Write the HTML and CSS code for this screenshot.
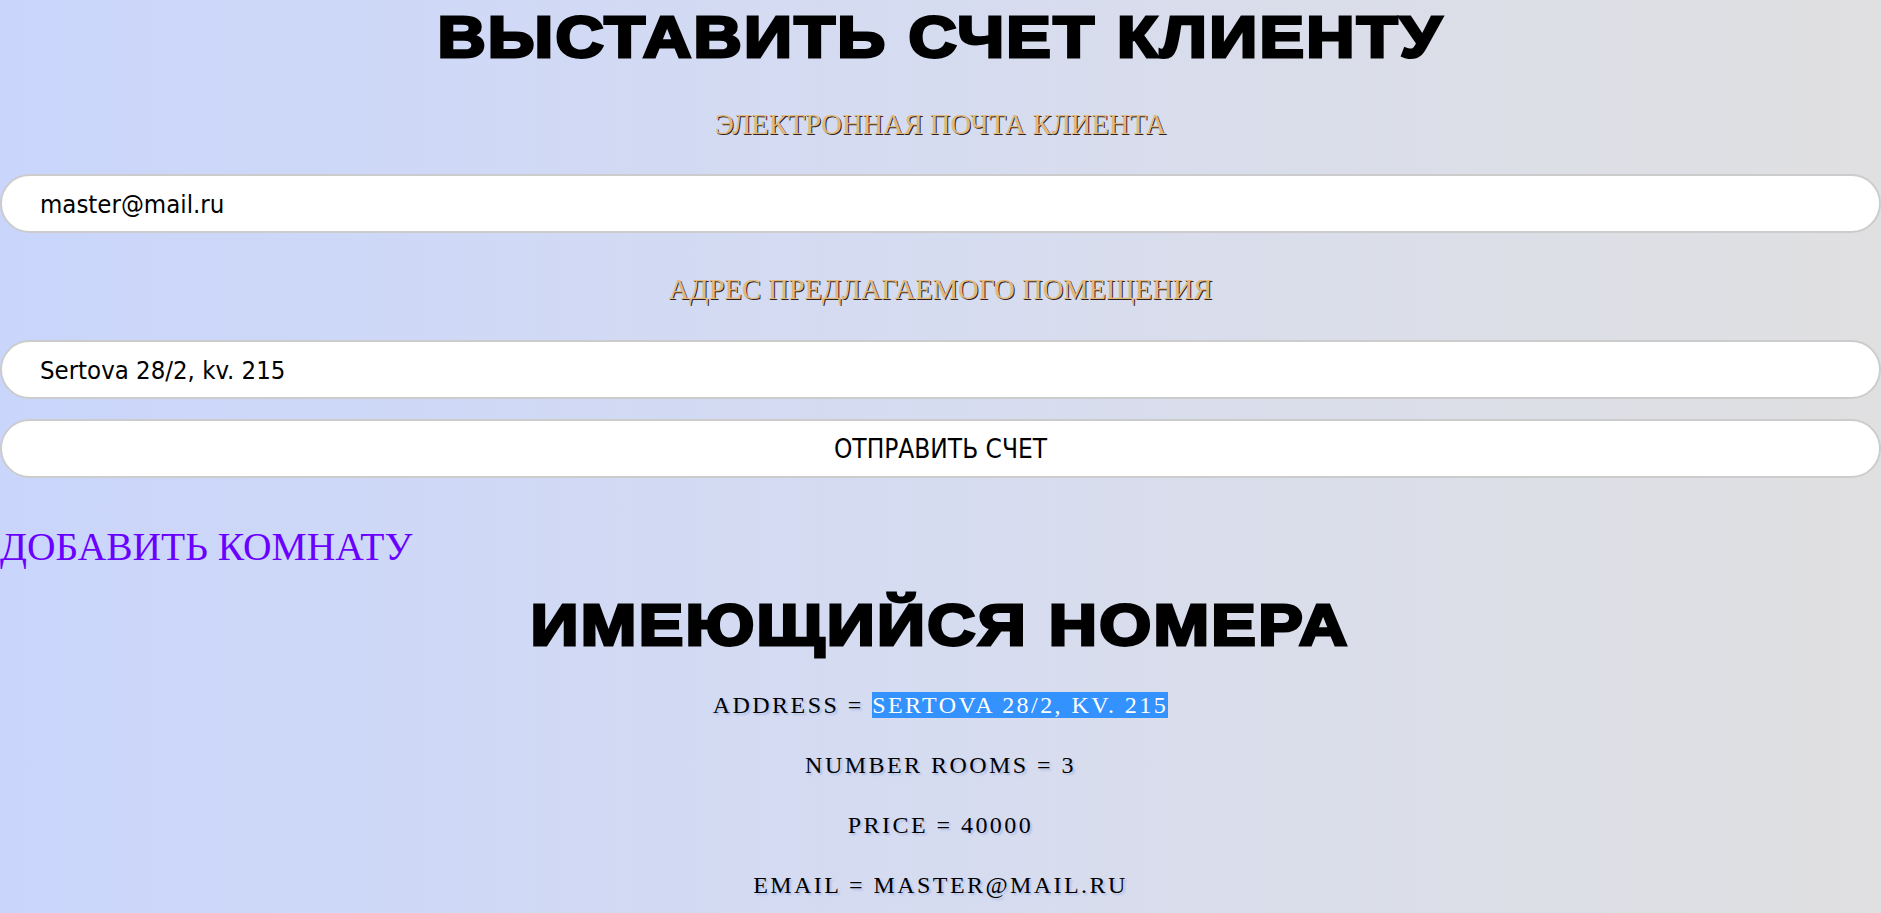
FILE: index.html
```html
<!DOCTYPE html>
<html lang="ru">
<head>
<meta charset="utf-8">
<title>Выставить счет клиенту</title>
<link rel="stylesheet" href="styles.css">
</head>
<body>
<main class="page">
  <h1 class="title"><span class="title-text">ВЫСТАВИТЬ СЧЕТ КЛИЕНТУ</span></h1>
  <form class="invoice">
    <label class="label label-first" for="email">ЭЛЕКТРОННАЯ ПОЧТА КЛИЕНТА</label>
    <input class="field field-first" id="email" type="text" value="master@mail.ru">
    <label class="label label-second" for="address">АДРЕС ПРЕДЛАГАЕМОГО ПОМЕЩЕНИЯ</label>
    <input class="field field-second" id="address" type="text" value="Sertova 28/2, kv. 215">
    <button class="send" type="button">ОТПРАВИТЬ СЧЕТ</button>
  </form>
  <a class="add-room" href="#">ДОБАВИТЬ КОМНАТУ</a>
  <h2 class="title title-rooms"><span class="title-text">ИМЕЮЩИЙСЯ НОМЕРА</span></h2>
  <ul class="rooms">
    <li class="room-line">address = <span class="selected">Sertova 28/2, kv. 215</span></li>
    <li class="room-line">number rooms = 3</li>
    <li class="room-line">price = 40000</li>
    <li class="room-line">email = master@mail.ru</li>
  </ul>
</main>
</body>
</html>
```
FILE: styles.css
```css
html, body {
  margin: 0;
  padding: 0;
}
body {
  min-height: 100vh;
  background: linear-gradient(to right, #c9d5fb 0%, #d6dcf0 50%, #e0e0e1 100%);
  font-family: "Liberation Serif", "Times New Roman", serif;
  color: #000;
}
.page {
  display: flex;
  flex-direction: column;
}
.title {
  margin: 0;
  font-family: "Liberation Sans", Arial, sans-serif;
  font-weight: 700;
  font-size: 58px;
  line-height: 74px;
  text-align: center;
  color: #000;
}
.title-text {
  display: inline-block;
  letter-spacing: 2px;
  -webkit-text-stroke: 3px #000;
  transform: scaleX(1.15);
}
.title-rooms {
  margin-top: 18px;
}
.invoice {
  display: flex;
  flex-direction: column;
}
.label {
  display: block;
  text-align: center;
  font-family: "Liberation Serif", "Times New Roman", serif;
  font-size: 28.5px;
  line-height: 31px;
  color: #e2b97d;
  text-shadow: 1px 1px 0 #2c2226;
}
.label-first {
  margin-top: 35px;
}
.label-second {
  margin-top: 41px;
}
.field, .send {
  box-sizing: border-box;
  display: block;
  width: 100%;
  height: 59px;
  margin: 0;
  border: 2px solid #cccccc;
  border-radius: 30px;
  background: #fff;
  font-family: "DejaVu Sans", Tahoma, sans-serif;
  font-stretch: condensed;
  font-size: 25.5px;
  color: #000;
  outline: none;
}
.field {
  padding: 0 0 0 38px;
}
.field-first {
  margin-top: 34px;
}
.field-second {
  margin-top: 35px;
}
.send {
  margin-top: 20px;
  text-align: center;
  padding: 0;
  font-size: 26px;
}
.add-room {
  align-self: flex-start;
  margin-top: 46px;
  font-size: 39.5px;
  line-height: 46px;
  color: #6a00ff;
  text-decoration: none;
}
.rooms {
  list-style: none;
  margin: 29px 0 0;
  padding: 0;
  display: flex;
  flex-direction: column;
  gap: 32px;
}
.room-line {
  text-align: center;
  text-transform: uppercase;
  font-size: 24px;
  line-height: 28px;
  letter-spacing: 2.45px;
  text-shadow: 2px 2px 2px #aebde6;
}
.selected {
  background: #3392fd;
  color: #fff;
  text-shadow: none;
}
```
